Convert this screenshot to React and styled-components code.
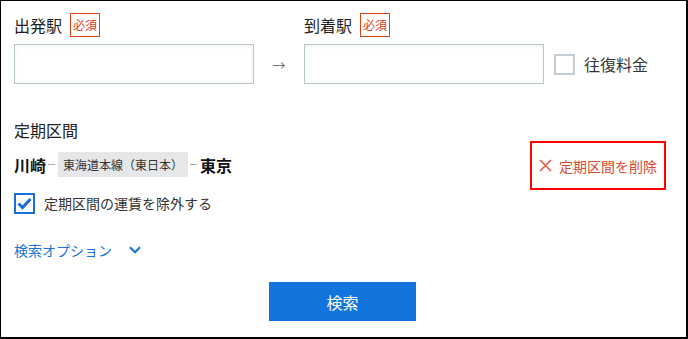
import React from "react";
import styled, { createGlobalStyle } from "styled-components";

const GlobalStyle = createGlobalStyle`
  html, body {
    margin: 0;
    padding: 0;
    background: #fff;
  }
  body {
    font-family: "Noto Sans CJK JP", "Noto Sans", sans-serif;
    color: #333;
  }
`;

const Frame = styled.div`
  box-sizing: border-box;
  width: 688px;
  height: 339px;
  border: 1px solid #000;
  border-right-width: 2px;
  border-bottom-width: 2px;
  padding: 0 0 0 13px;
  display: flex;
  flex-direction: column;
`;

const StationRow = styled.div`
  display: flex;
  align-items: flex-end;
  margin-top: 12px;
`;

const Field = styled.div`
  display: flex;
  flex-direction: column;
  gap: 7px;
`;

const LabelLine = styled.div`
  display: flex;
  align-items: center;
  gap: 8px;
  height: 24px;
`;

const Label = styled.span`
  font-size: 16px;
  color: #222;
  line-height: 20px;
`;

const Required = styled.span`
  box-sizing: border-box;
  height: 24px;
  padding: 0 2px;
  border: 1px solid #e0401a;
  color: #e0401a;
  font-size: 12px;
  line-height: 22px;
`;

const TextInput = styled.input`
  box-sizing: border-box;
  width: 240px;
  height: 40px;
  border: 1px solid #b5c6cd;
  box-shadow: inset 0 1px 4px rgba(0, 0, 0, 0.06);
  outline: none;
  padding: 0 8px;
  font-size: 14px;
  font-family: inherit;
`;

const Arrow = styled.div`
  width: 50px;
  height: 40px;
  display: flex;
  align-items: center;
  justify-content: center;
  color: #777;
  font-size: 13px;
`;

const Check = styled.label`
  display: flex;
  align-items: center;
  gap: ${(p) => p.$gap || 9}px;
  height: ${(p) => p.$h || 40}px;
  margin-left: ${(p) => p.$ml || 0}px;
  font-size: ${(p) => p.$fs || 16}px;
  color: #333;
  cursor: pointer;
`;

const Box = styled.span`
  box-sizing: border-box;
  width: 21px;
  height: 21px;
  border: 2px solid ${(p) => (p.$checked ? "#1a6fd6" : "#c1ccd3")};
  display: flex;
  align-items: center;
  justify-content: center;
`;

const SectionTitle = styled.div`
  margin-top: 36px;
  font-size: 16px;
  color: #222;
  line-height: 20px;
`;

const PassRow = styled.div`
  display: flex;
  align-items: center;
  justify-content: space-between;
  margin-top: 1px;
  padding-right: 20px;
`;

const Route = styled.div`
  display: flex;
  align-items: center;
  padding-bottom: 2px;
`;

const Station = styled.span`
  font-size: 16px;
  font-weight: 700;
  color: #111;
`;

const Dash = styled.span`
  width: 7px;
  height: 1px;
  background: #aaa;
  margin: 0 3px 0 2px;
`;

const LineChip = styled.span`
  background: #e5e7e8;
  height: 25px;
  padding: 0 5px;
  display: flex;
  align-items: center;
  font-size: 12px;
  color: #333;
`;

const DeleteButton = styled.button`
  box-sizing: border-box;
  width: 136px;
  height: 49px;
  border: 2px solid #f00;
  background: #fff;
  color: #e04a2e;
  font-family: inherit;
  font-size: 14px;
  display: flex;
  align-items: center;
  justify-content: center;
  gap: 7px;
  padding: 0;
  cursor: pointer;
`;

const ExcludeRow = styled.div`
  margin-top: 2px;
`;

const OptionsLink = styled.a`
  display: flex;
  align-items: center;
  gap: 17px;
  height: 20px;
  margin-top: 26px;
  color: #1a73d9;
  font-size: 14px;
  text-decoration: none;
  cursor: pointer;
`;

const SubmitRow = styled.div`
  display: flex;
  justify-content: center;
  margin-top: 22px;
  padding-right: 15px;
`;

const Submit = styled.button`
  width: 147px;
  height: 39px;
  background: #1175dd;
  border: none;
  color: #fff;
  font-family: inherit;
  font-size: 16px;
  cursor: pointer;
`;

const Tick = () => (
  <svg width="15" height="13" viewBox="0 0 15 13">
    <path d="M1.5 6.5 L5.5 10.5 L13.5 2" fill="none" stroke="#1a6fd6" strokeWidth="3" />
  </svg>
);

const Cross = () => (
  <svg width="13" height="13" viewBox="0 0 13 13">
    <path d="M1 1 L12 12 M12 1 L1 12" stroke="#e85a4a" strokeWidth="1.6" />
  </svg>
);

const Chevron = () => (
  <svg width="12" height="8" viewBox="0 0 12 8">
    <path d="M1 1.2 L6 6.2 L11 1.2" fill="none" stroke="#1a73d9" strokeWidth="2.2" />
  </svg>
);

export default function App() {
  return (
    <>
      <GlobalStyle />
      <Frame>
        <StationRow>
          <Field>
            <LabelLine>
              <Label>出発駅</Label>
              <Required>必須</Required>
            </LabelLine>
            <TextInput type="text" />
          </Field>
          <Arrow>→</Arrow>
          <Field>
            <LabelLine>
              <Label>到着駅</Label>
              <Required>必須</Required>
            </LabelLine>
            <TextInput type="text" />
          </Field>
          <Check $ml={10}>
            <Box />
            往復料金
          </Check>
        </StationRow>

        <SectionTitle>定期区間</SectionTitle>
        <PassRow>
          <Route>
            <Station>川崎</Station>
            <Dash />
            <LineChip>東海道本線（東日本）</LineChip>
            <Dash />
            <Station>東京</Station>
          </Route>
          <DeleteButton>
            <Cross />
            定期区間を削除
          </DeleteButton>
        </PassRow>

        <ExcludeRow>
          <Check $h={22} $fs={14} $gap={9}>
            <Box $checked>
              <Tick />
            </Box>
            定期区間の運賃を除外する
          </Check>
        </ExcludeRow>

        <OptionsLink>
          検索オプション
          <Chevron />
        </OptionsLink>

        <SubmitRow>
          <Submit>検索</Submit>
        </SubmitRow>
      </Frame>
    </>
  );
}
